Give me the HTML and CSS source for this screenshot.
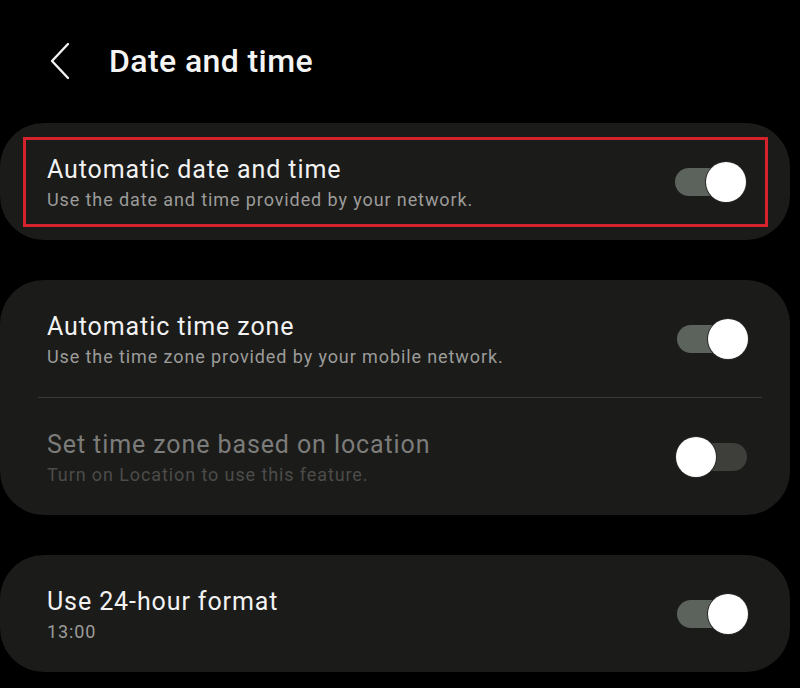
FILE: index.html
```html
<!DOCTYPE html>
<html lang="en">

<head>
    <meta charset="UTF-8">
    <title>Date and time</title>
    <link rel="stylesheet" href="styles.css">
</head>

<body>

    <header class="top-bar">
        <svg class="back" width="24" height="40" viewBox="0 0 24 40">
            <path d="M20 3 L4 20 L20 37" fill="none" stroke="#f2f2f2" stroke-width="2.4" stroke-linecap="round" stroke-linejoin="round"/>
        </svg>
        <h1>Date and time</h1>
    </header>

    <!-- Bloco 1 -->
    <section class="card card-first">
        <div class="row marked">
            <div class="text">
                <p class="title">Automatic date and time</p>
                <p class="sub">Use the date and time provided by your network.</p>
            </div>
            <span class="switch on"><span class="thumb"></span></span>
        </div>
    </section>

    <!-- Bloco 2 -->
    <section class="card">
        <div class="row">
            <div class="text">
                <p class="title">Automatic time zone</p>
                <p class="sub">Use the time zone provided by your mobile network.</p>
            </div>
            <span class="switch on"><span class="thumb"></span></span>
        </div>
        <div class="divider"></div>
        <div class="row disabled">
            <div class="text">
                <p class="title">Set time zone based on location</p>
                <p class="sub">Turn on Location to use this feature.</p>
            </div>
            <span class="switch off"><span class="thumb"></span></span>
        </div>
    </section>

    <!-- Bloco 3 -->
    <section class="card">
        <div class="row">
            <div class="text">
                <p class="title">Use 24-hour format</p>
                <p class="sub">13:00</p>
            </div>
            <span class="switch on"><span class="thumb"></span></span>
        </div>
    </section>

</body>

</html>
```

FILE: styles.css
```css
body {
    font-family: Roboto, "Noto Sans", sans-serif;
    background-color: #000;
    color: #f2f2f2;
    margin: 0;
    padding: 0;
    width: 800px;
    height: 688px;
    overflow: hidden;
}

.top-bar {
    height: 123px;
    display: flex;
    align-items: center;
    padding-left: 48px;
    box-sizing: border-box;
    padding-bottom: 2px;
}

.back {
    display: block;
    margin-right: 37px;
}

h1 {
    margin: 0;
    font-size: 32px;
    font-weight: 500;
    letter-spacing: 0.4px;
    color: #f4f4f4;
}

.card {
    width: 790px;
    background-color: #1b1b19;
    border-radius: 44px;
    margin-bottom: 40px;
}

.card-first {
    padding: 14px 22px 13px 23px;
    box-sizing: border-box;
}

.row {
    height: 117px;
    display: flex;
    align-items: center;
    padding: 0 43px 0 47px;
    box-sizing: border-box;
}

.row.marked {
    height: 90px;
    border: 3px solid #d4232d;
    padding: 0 20px 0 21px;
}

.text {
    flex: 1;
    padding-top: 3px;
}

.title {
    margin: 0;
    font-size: 25px;
    line-height: 30px;
    letter-spacing: 0.9px;
}

.sub {
    margin: 3px 0 0;
    font-size: 18px;
    line-height: 24px;
    letter-spacing: 0.9px;
    color: #9c9c9a;
}

.disabled .title {
    color: #7c7c7a;
}

.disabled .sub {
    color: #4c4c4a;
}

.divider {
    height: 1px;
    margin: 0 28px 0 38px;
    background-color: #3b3b39;
}

.switch {
    position: relative;
    width: 70px;
    height: 28px;
    border-radius: 14px;
}

.switch.on {
    background-color: #5c635d;
}

.switch.off {
    background-color: #3e3e3b;
}

.thumb {
    position: absolute;
    top: -6px;
    width: 40px;
    height: 40px;
    border-radius: 50%;
    background-color: #fff;
    box-shadow: 0 0 0 1px #2a2a28;
}

.on .thumb {
    right: -1px;
}

.off .thumb {
    left: -1px;
}
```
